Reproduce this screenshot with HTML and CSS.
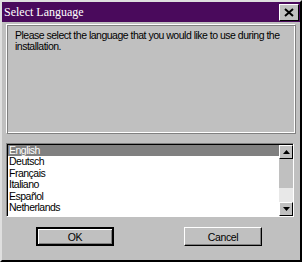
FILE: index.html
```html
<!DOCTYPE html>
<html lang="en">
<head>
  <meta charset="UTF-8" />
  <title>Select Language</title>
  <link rel="stylesheet" href="styles.css">
</head>
<body>
  <div class="window">
    <div class="titlebar">
      <span class="title">Select Language</span>
      <div class="close">
        <svg width="10" height="9" viewBox="0 0 10 9">
          <path d="M1 1 L9 8 M9 1 L1 8" stroke="#000" stroke-width="2" />
        </svg>
      </div>
    </div>
    <div class="content">
      <div class="panel">
        <p>Please select the language that you would like to use during the installation.</p>
      </div>
      <div class="listbox">
        <ul class="items">
          <li class="selected">English</li>
          <li>Deutsch</li>
          <li>Français</li>
          <li>Italiano</li>
          <li>Español</li>
          <li>Netherlands</li>
        </ul>
        <div class="scrollbar">
          <div class="arrow"><svg width="7" height="4" viewBox="0 0 7 4"><path d="M3.5 0 L7 4 L0 4 Z" fill="#000"/></svg></div>
          <div class="track"></div>
          <div class="thumb"></div>
          <div class="arrow"><svg width="7" height="4" viewBox="0 0 7 4"><path d="M0 0 L7 0 L3.5 4 Z" fill="#000"/></svg></div>
        </div>
      </div>
      <div class="buttons">
        <button class="btn default">OK</button>
        <button class="btn">Cancel</button>
      </div>
    </div>
  </div>
</body>
</html>
```
FILE: styles.css
```css
body {
  margin: 0;
  background-color: #c0c0c0;
  font-family: "Liberation Sans", Arial, sans-serif;
  font-size: 10.5px;
  letter-spacing: -0.5px;
  color: #000;
}
.window {
  width: 302px;
  height: 262px;
  box-sizing: border-box;
  background-color: #c0c0c0;
  border: 2px solid;
  border-color: #dfdfdf #000 #000 #dfdfdf;
  display: flex;
  flex-direction: column;
}
.titlebar {
  height: 20px;
  background-color: #4a0a5c;
  display: flex;
  align-items: center;
  justify-content: space-between;
  padding: 0 1px 0 2px;
}
.title {
  font-family: "Liberation Serif", "Times New Roman", serif;
  font-size: 12px;
  letter-spacing: 0;
  color: #fff;
}
.close {
  width: 18px;
  height: 15px;
  background-color: #c0c0c0;
  border: 1px solid;
  border-color: #fff #000 #000 #fff;
  display: flex;
  align-items: center;
  justify-content: center;
}
.content {
  flex: 1;
  padding: 2px 4px 0 4px;
  display: flex;
  flex-direction: column;
}
.panel {
  height: 98px;
  border: 1px solid;
  border-color: #fff #808080 #808080 #fff;
  box-shadow: inset 1px 1px 0 #808080, inset -1px -1px 0 #fff;
  padding: 5px 6px 5px 8px;
}
.panel p {
  margin: 0;
  line-height: 11px;
}
.listbox {
  margin-top: 9px;
  height: 74px;
  width: 288px;
  box-sizing: border-box;
  border: 1px solid;
  border-color: #808080 #fff #fff #808080;
  box-shadow: inset 1px 1px 0 #000;
  background-color: #fff;
  display: flex;
}
.items {
  list-style: none;
  margin: 0;
  padding: 1px 0 0 1px;
  flex: 1;
}
.items li {
  height: 11.4px;
  line-height: 11px;
  padding-left: 1px;
}
.items li.selected {
  background-color: #808080;
  color: #fff;
}
.scrollbar {
  width: 14px;
  margin: 1px 0 0 0;
  display: flex;
  flex-direction: column;
  background-color: #c0c0c0;
}
.arrow {
  height: 14px;
  box-sizing: border-box;
  border: 1px solid;
  border-color: #fff #000 #000 #fff;
  background-color: #c0c0c0;
  display: flex;
  align-items: center;
  justify-content: center;
}
.track {
  flex: 1;
  background-color: #c0c0c0;
}
.thumb {
  height: 14px;
  background-color: #e8e8e8;
}
.buttons {
  display: flex;
  justify-content: space-between;
  padding: 10px 34px 0 30px;
}
.btn {
  width: 78px;
  height: 19px;
  font-family: "Liberation Sans", Arial, sans-serif;
  font-size: 10.5px;
  letter-spacing: -0.4px;
  background-color: #c0c0c0;
  border: 1px solid;
  border-color: #fff #000 #000 #fff;
  box-shadow: inset -1px -1px 0 #808080;
  padding: 0;
  color: #000;
}
.btn.default {
  border: 2px solid #000;
  box-shadow: inset 1px 1px 0 #fff, inset -1px -1px 0 #808080;
}
```
